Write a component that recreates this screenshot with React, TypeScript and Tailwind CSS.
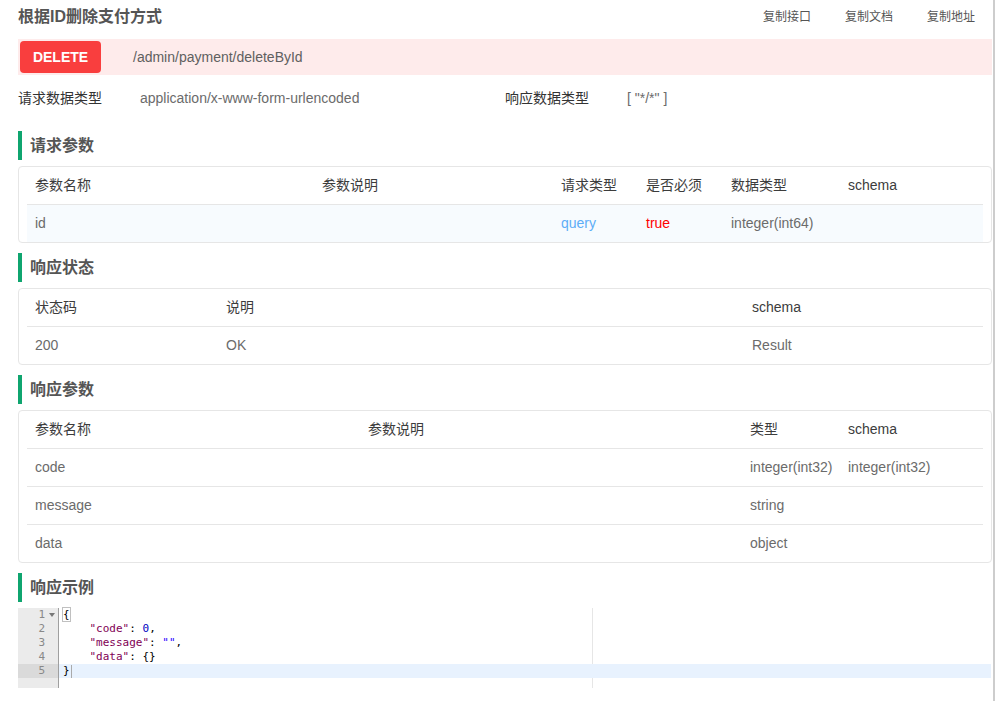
import React from 'react';

const sans = "font-['Liberation_Sans','Noto_Sans_CJK_SC',sans-serif]";

function SectionTitle({ title }: { title: string }) {
  return (
    <div className="mt-[10px] flex h-[29px] items-center border-l-4 border-[#0fa56f] pl-[8px] text-[16px] font-bold text-[#555]">
      {title}
    </div>
  );
}

type Cell = { text: string; className?: string };

function Table({ cols, head, rows, highlightFirst }: { cols: string; head: string[]; rows: Cell[][]; highlightFirst?: boolean }) {
  return (
    <div className="mt-[6px] rounded-[4px] border border-[#e6e6e6] px-[8px]">
      <div className={`grid h-[38px] items-center border-b border-[#e6e6e6] text-[#3c3c3c] ${cols}`}>
        {head.map((h, i) => (
          <div key={i} className="px-[8px]">{h}</div>
        ))}
      </div>
      {rows.map((row, ri) => (
        <div
          key={ri}
          className={`grid items-center text-[#6b6b6b] ${cols} ${ri === rows.length - 1 ? 'h-[37px]' : 'h-[38px] border-b border-[#e6e6e6]'} ${highlightFirst && ri === 0 ? 'bg-[#f7fbfe]' : ''}`}
        >
          {row.map((c, ci) => (
            <div key={ci} className={`px-[8px] ${c.className ?? ''}`}>{c.text}</div>
          ))}
        </div>
      ))}
    </div>
  );
}

const t = (text: string, className?: string): Cell => ({ text, className });

function CodeBlock() {
  const key = 'text-[#7f0055]';
  return (
    <div className="relative mt-[6px] flex h-[80px] font-['DejaVu_Sans_Mono',monospace] text-[11px] leading-[14px] text-black">
      <div className="w-[41px] border-r border-[#9f9f9f] bg-[#ebebeb] text-[#888]">
        {[1, 2, 3, 4, 5].map(n => (
          <div key={n} className={`relative h-[14px] pr-[13px] text-right ${n === 5 ? 'bg-[#dadada]' : ''}`}>
            {n}
            {n === 1 && (
              <svg className="absolute right-[3px] top-[5px]" width="6" height="4" viewBox="0 0 6 4">
                <path d="M0 0 L6 0 L3 4 Z" fill="#777" />
              </svg>
            )}
          </div>
        ))}
      </div>
      <div className="relative flex-1 pr-[1px]">
        <div className="absolute left-[533px] top-0 h-full w-px bg-[#e6e6e6]" />
        <div className="relative">
          <div className="h-[14px] whitespace-pre pl-[4px]">
            <span className="outline outline-1 outline-[#c0c0c0]">{'{'}</span>
          </div>
          <div className="h-[14px] whitespace-pre pl-[4px]">
            {'    '}<span className={key}>"code"</span>: <span className="text-[#0000c0]">0</span>,
          </div>
          <div className="h-[14px] whitespace-pre pl-[4px]">
            {'    '}<span className={key}>"message"</span>: <span className="text-[#2a00ff]">""</span>,
          </div>
          <div className="h-[14px] whitespace-pre pl-[4px]">
            {'    '}<span className={key}>"data"</span>: {'{}'}
          </div>
          <div className="flex h-[14px] items-center whitespace-pre bg-[#e8f2fe] pl-[4px]">
            <span>{'}'}</span>
            <span className="ml-[1px] h-[13px] w-px bg-[#aaa]" />
          </div>
        </div>
      </div>
    </div>
  );
}

export default function App() {
  return (
    <div className={`min-h-[701px] w-[995px] border-r-2 border-[#cdcdcd] bg-white pl-[18px] pr-[1px] text-[14px] text-[#6b6b6b] ${sans}`}>
      <div className="flex h-[34px] items-center justify-between">
        <div className="text-[16px] font-bold text-[#555]">根据ID删除支付方式</div>
        <div className="flex gap-[34px] pr-[17px] text-[12px] text-[#555]">
          <span>复制接口</span>
          <span>复制文档</span>
          <span>复制地址</span>
        </div>
      </div>

      <div className="mt-[5px] flex h-[36px] items-center bg-[#feebeb] pl-[2px]">
        <div className="flex h-[32px] w-[81px] items-center justify-center rounded-[4px] bg-[#f93e3e] text-[14px] font-bold text-white">
          DELETE
        </div>
        <div className="ml-[32px] text-[#606060]">/admin/payment/deleteById</div>
      </div>

      <div className="grid h-[46px] grid-cols-2 items-center">
        <div className="flex">
          <span className="w-[122px] text-[#333]">请求数据类型</span>
          <span>application/x-www-form-urlencoded</span>
        </div>
        <div className="flex">
          <span className="w-[122px] text-[#333]">响应数据类型</span>
          <span>[ "*/*" ]</span>
        </div>
      </div>

      <SectionTitle title="请求参数" />
      <Table
        cols="grid-cols-[287px_239px_85px_85px_117px_1fr]"
        head={['参数名称', '参数说明', '请求类型', '是否必须', '数据类型', 'schema']}
        rows={[[t('id'), t(''), t('query', 'text-[#5dadf7]'), t('true', 'text-[#ff0000]'), t('integer(int64)'), t('')]]}
        highlightFirst
      />

      <SectionTitle title="响应状态" />
      <Table
        cols="grid-cols-[191px_526px_1fr]"
        head={['状态码', '说明', 'schema']}
        rows={[[t('200'), t('OK'), t('Result')]]}
      />

      <SectionTitle title="响应参数" />
      <Table
        cols="grid-cols-[333px_382px_98px_1fr]"
        head={['参数名称', '参数说明', '类型', 'schema']}
        rows={[
          [t('code'), t(''), t('integer(int32)'), t('integer(int32)')],
          [t('message'), t(''), t('string'), t('')],
          [t('data'), t(''), t('object'), t('')],
        ]}
      />

      <SectionTitle title="响应示例" />
      <CodeBlock />
    </div>
  );
}
